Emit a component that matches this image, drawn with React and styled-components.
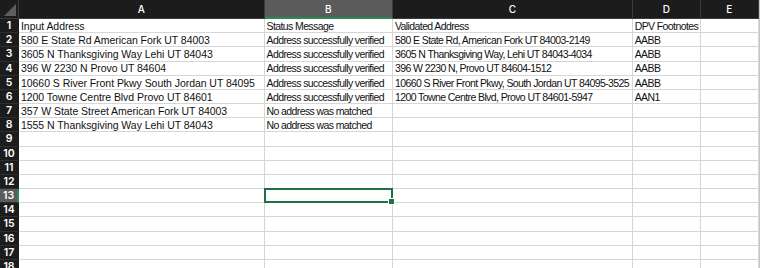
import React from "react";
import styled, { createGlobalStyle } from "styled-components";

const Global = createGlobalStyle`
  html, body { margin: 0; padding: 0; background: #ffffff; }
  body { width: 760px; height: 268px; overflow: hidden; }
`;

const Sheet = styled.div`
  display: grid;
  grid-template-columns: 19px 245.5px 128.5px 239.7px 68.3px 57.7px 1fr;
  grid-template-rows: 19px;
  grid-auto-rows: 14.18px;
  width: 760px;
  height: 268px;
  overflow: hidden;
  background: #ffffff;
`;

const Corner = styled.div`
  background: #1c1c1c;
  position: relative;
  border-right: 1px solid #3a3a3a;
  border-bottom: 1px solid #3a3a3a;
  box-sizing: border-box;
  &::after {
    content: "";
    position: absolute;
    right: 2px;
    bottom: 2px;
    width: 0;
    height: 0;
    border-left: 12px solid transparent;
    border-bottom: 12px solid #5e5e5e;
  }
`;

const ColHead = styled.div`
  box-sizing: border-box;
  background: ${(p) => (p.$active ? "#5b5b5b" : "#1c1c1c")};
  color: #ffffff;
  font-family: "Inter", "Liberation Sans", sans-serif;
  font-size: 10px;
  font-weight: 500;
  display: flex;
  align-items: center;
  justify-content: center;
  border-right: 1px solid #3a3a3a;
  border-bottom: ${(p) => (p.$active ? "2px solid #2a8a55" : "1px solid #3a3a3a")};
`;

const Filler = styled.div`
  background: ${(p) => (p.$head ? "#1c1c1c" : "#ffffff")};
  border-left: 1px solid #c8c8c8;
`;

const RowHead = styled.div`
  box-sizing: border-box;
  background: ${(p) => (p.$active ? "#5b5b5b" : "#1c1c1c")};
  color: #ffffff;
  font-family: "Inter", "Liberation Sans", sans-serif;
  font-size: 10.5px;
  font-weight: 600;
  display: flex;
  align-items: center;
  justify-content: center;
  border-bottom: 1px solid #2e2e2e;
  border-right: ${(p) => (p.$active ? "2px solid #2a8a55" : "1px solid #1c1c1c")};
`;

const Cell = styled.div`
  box-sizing: border-box;
  position: relative;
  border-right: 1px solid #d6d6d6;
  border-bottom: 1px solid #d6d6d6;
  color: #111111;
  font-family: "Liberation Sans", "Arial", sans-serif;
  font-size: 10.5px;
  letter-spacing: ${(p) => (p.$wide ? "-0.05px" : "-0.6px")};
  white-space: nowrap;
  overflow: visible;
  display: flex;
  align-items: center;
  padding-left: 2px;
  padding-top: 1px;
  line-height: 1;
`;

const Selection = styled.div`
  position: absolute;
  left: -1px;
  top: -1px;
  right: -1px;
  bottom: -1px;
  border: 2px solid #1e7145;
  pointer-events: none;
  z-index: 2;
`;

const Handle = styled.div`
  position: absolute;
  right: -4px;
  bottom: -4px;
  width: 5px;
  height: 5px;
  background: #1e7145;
  border: 1px solid #ffffff;
`;

const data = [
  ["Input Address", "Status Message", "Validated Address", "DPV Footnotes"],
  ["580 E State Rd American Fork UT 84003", "Address successfully verified", "580 E State Rd, American Fork UT 84003-2149", "AABB"],
  ["3605 N Thanksgiving Way Lehi UT 84043", "Address successfully verified", "3605 N Thanksgiving Way, Lehi UT 84043-4034", "AABB"],
  ["396 W 2230 N Provo UT 84604", "Address successfully verified", "396 W 2230 N, Provo UT 84604-1512", "AABB"],
  ["10660 S River Front Pkwy South Jordan UT 84095", "Address successfully verified", "10660 S River Front Pkwy, South Jordan UT 84095-3525", "AABB"],
  ["1200 Towne Centre Blvd Provo UT 84601", "Address successfully verified", "1200 Towne Centre Blvd, Provo UT 84601-5947", "AAN1"],
  ["357 W State Street American Fork UT 84003", "No address was matched", "", ""],
  ["1555 N Thanksgiving Way Lehi UT 84043", "No address was matched", "", ""],
];

const cols = ["A", "B", "C", "D", "E"];

export default function App() {
  const rows = [];
  for (let r = 1; r <= 18; r++) {
    const d = data[r - 1] || ["", "", "", ""];
    const active = r === 13;
    rows.push(
      <React.Fragment key={r}>
        <RowHead $active={active}>{r}</RowHead>
        <Cell $wide>{d[0]}</Cell>
        <Cell>
          {d[1]}
          {active && (
            <Selection>
              <Handle />
            </Selection>
          )}
        </Cell>
        <Cell>{d[2]}</Cell>
        <Cell>{d[3]}</Cell>
        <Cell />
        <Filler />
      </React.Fragment>
    );
  }
  return (
    <>
      <Global />
      <Sheet>
        <Corner />
        {cols.map((c) => (
          <ColHead key={c} $active={c === "B"}>
            {c}
          </ColHead>
        ))}
        <Filler $head />
        {rows}
      </Sheet>
    </>
  );
}
